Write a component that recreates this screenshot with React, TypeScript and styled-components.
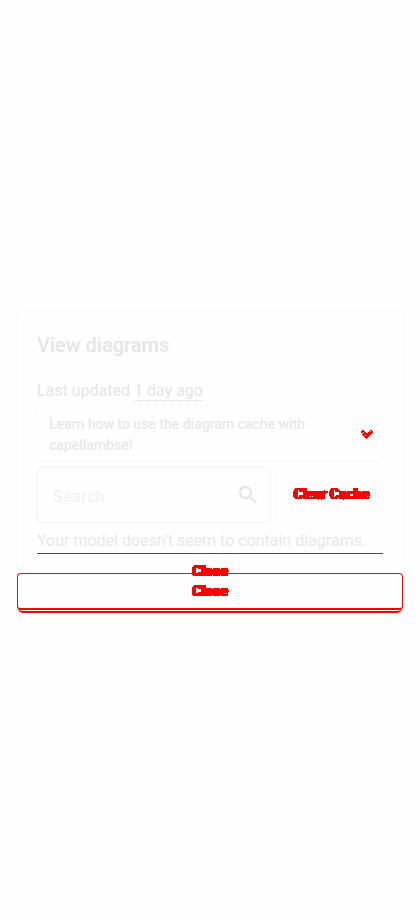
import React from "react";
import styled, { createGlobalStyle } from "styled-components";

const GlobalStyle = createGlobalStyle`
  * { box-sizing: border-box; }
  body { margin: 0; background: #fefefe; font-family: Roboto, sans-serif; }
`;

const Page = styled.main`
  width: 420px;
  height: 920px;
  padding: 311px 17px 0;
  overflow: hidden;
`;

const Card = styled.section`
  height: 302px;
  display: flex;
  flex-direction: column;
  background: #fefefe;
  border-radius: 5px;
  box-shadow: 0 0 3px #f8f8f8;
`;

const Body = styled.div`
  flex: none;
  height: 243px;
  margin: 0 20px;
  padding-top: 22px;
  border-bottom: 1px solid #f00;
`;

const Title = styled.h1`
  margin: 0;
  font-size: 20px;
  line-height: 24px;
  font-weight: 500;
  color: #e5e5e5;
`;

const Updated = styled.p`
  margin: 22px 0 0;
  font-size: 16px;
  line-height: 24px;
  height: 24px;
  color: #e5e5e5;
`;

const Ago = styled.span`
  display: inline-block;
  line-height: 20px;
  height: 20px;
  border-bottom: 1px dotted #d8d8d8;
`;

const Accordion = styled.div`
  display: flex;
  align-items: center;
  justify-content: space-between;
  width: 346px;
  height: 50px;
  margin-top: 7px;
  padding: 0 9px 1px 12px;
  border-radius: 4px;
  box-shadow: 0 1px 3px #f3f3f3;
  font-size: 14px;
  line-height: 21px;
  font-weight: 500;
  color: #e8e8e8;
`;

const AccordionText = styled.span`
  width: 280px;
`;

const Controls = styled.div`
  display: flex;
  gap: 5px;
  margin-top: 7px;
`;

const SearchBox = styled.div`
  display: flex;
  align-items: center;
  justify-content: space-between;
  width: 234px;
  height: 56px;
  padding: 0 10px 0 15px;
  border: 1px solid #f4f4f4;
  border-radius: 4px;
  font-size: 16px;
  letter-spacing: 0.5px;
  color: #f0f0f0;
`;

const Placeholder = styled.span`
  padding-top: 3px;
`;

const ClearButton = styled.button`
  width: 107px;
  padding: 0 0 2px 4px;
  border: 1px solid #fcfcfc;
  border-radius: 4px;
  background: transparent;
  font: 500 14px Roboto, sans-serif;
  color: #f00;
`;

const Marked = styled.span`
  display: inline-block;
  filter: url(#hard-edges);
  -webkit-text-stroke: 0.5px #f00;
`;

const Empty = styled.p`
  margin: 6px 0 0;
  font-size: 16px;
  line-height: 24px;
  color: #e8e8e8;
  white-space: nowrap;
`;

const Footer = styled.div`
  flex: none;
  height: 37px;
  margin-top: 19px;
  border: 1px solid #f00;
  border-bottom: 2px solid #f00;
  border-radius: 4px;
`;

const FooterBase = styled.div`
  flex: none;
  height: 5px;
  margin: -2px 1px 0;
  border-bottom: 2px solid #f00;
  border-radius: 0 0 5px 5px;
`;

const CloseLabels = styled.div`
  display: flex;
  flex-direction: column;
  align-items: center;
  margin-top: -13px;
  font-size: 14px;
  line-height: 20px;
  font-weight: 500;
  color: #f00;
`;

export default function App() {
  return (
    <Page>
      <GlobalStyle />
      <Card>
        <Body>
          <Title>View diagrams</Title>
          <Updated>
            Last updated <Ago>1 day ago</Ago>
          </Updated>
          <Accordion>
            <AccordionText>Learn how to use the diagram cache with capellambse!</AccordionText>
            <svg width="14" height="10" viewBox="0 0 14 10" fill="#f00" shapeRendering="crispEdges">
              <path d="M2 0h2v1h1v1h1v1h2V2h1V1h1V0h2v1h1v2h-1v1h-1v1h-1v1H9v1H8v1H7v1H6V8H5V7H4V6H3V5H2V4h1V3H1V1h1z" />
              <path d="M3 2h1v1H3zM10 1h1v1h-1zM5 5h1v1H5z" fill="#fff" />
            </svg>
          </Accordion>
          <Controls>
            <SearchBox>
              <Placeholder>Search</Placeholder>
              <svg width="24" height="24" viewBox="0 0 24 24" fill="#e6e6e6" stroke="#e6e6e6" strokeWidth="0.5">
                <path d="M15.5 14h-.79l-.28-.27A6.471 6.471 0 0 0 16 9.5 6.5 6.5 0 1 0 9.5 16c1.61 0 3.09-.59 4.23-1.57l.27.28v.79l5 4.99L20.49 19l-4.99-5zm-6 0C7.01 14 5 11.99 5 9.5S7.01 5 9.5 5 14 7.01 14 9.5 11.99 14 9.5 14z" />
              </svg>
            </SearchBox>
            <ClearButton>
              <Marked>Clear Cache</Marked>
            </ClearButton>
          </Controls>
          <Empty>Your model doesn't seem to contain diagrams.</Empty>
        </Body>
        <Footer>
          <CloseLabels>
            <Marked>Close</Marked>
            <Marked>Close</Marked>
          </CloseLabels>
        </Footer>
        <FooterBase />
      </Card>
      <svg width="0" height="0">
        <filter id="hard-edges" colorInterpolationFilters="sRGB">
          <feOffset in="SourceGraphic" dx="1" result="right" />
          <feOffset in="SourceGraphic" dx="-1" result="left" />
          <feMerge>
            <feMergeNode in="left" />
            <feMergeNode in="right" />
          </feMerge>
          <feComponentTransfer>
            <feFuncA type="discrete" tableValues="0 0 1 1 1" />
          </feComponentTransfer>
        </filter>
      </svg>
    </Page>
  );
}
